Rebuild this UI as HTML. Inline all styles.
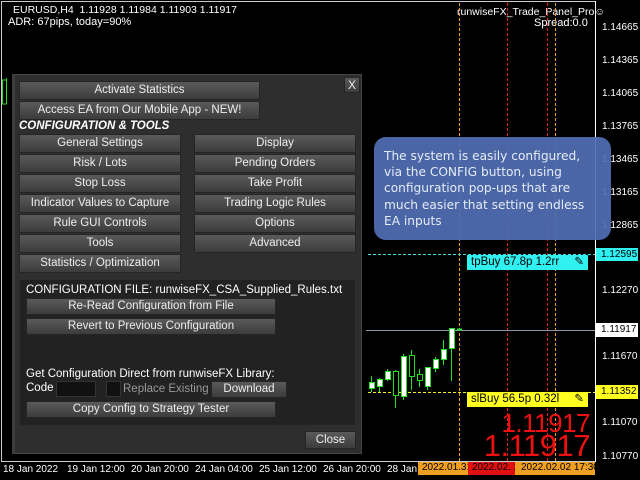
<!DOCTYPE html>
<html><head><meta charset="utf-8"><style>
*{margin:0;padding:0;box-sizing:border-box}
body{width:640px;height:480px;background:#000;position:relative;overflow:hidden;font-family:"Liberation Sans",sans-serif;font-size:11px;color:#fff}
.a{position:absolute}
.btn{position:absolute;height:19px;background:linear-gradient(#5a5a5a,#3c3c3c);border:1px solid #252525;color:#eee;text-align:center;line-height:17px;font-size:11.5px}
.sc{position:absolute;left:602px;font-size:10px;color:#fff}
.vd{position:absolute;width:0;top:3px;height:458px}
.bx{position:absolute;left:596px;width:42px;color:#000;font-size:10px;padding-left:5px}
</style></head><body>
<div class="a" style="left:1px;top:1px;width:595px;height:461px;border:1px solid #ccc;border-right:1px solid #fff"></div>
<div class="a" style="left:13px;top:4px;font-size:10.5px">EURUSD,H4&nbsp; 1.11928 1.11984 1.11903 1.11917</div>
<div class="a" style="left:8px;top:16px;font-size:11px">ADR: 67pips, today=90%</div>
<div class="a" style="left:457px;top:6px;font-size:10.5px">runwiseFX_Trade_Panel_Pro☺</div>
<div class="a" style="left:534px;top:17px;font-size:11px">Spread:0.0</div>

<div class="vd" style="left:459px;border-left:1px dashed #f0a020"></div>
<div class="vd" style="left:507px;border-left:1px dashed #e02020"></div>
<div class="vd" style="left:547px;border-left:1px dashed #e02020"></div>
<div class="vd" style="left:555px;border-left:1px dashed #f0a020"></div>
<div class="a" style="left:368px;top:254px;width:228px;border-top:1px dashed #40e0e0"></div>
<div class="a" style="left:366px;top:330px;width:230px;border-top:1px solid #8a96a8"></div>
<div class="a" style="left:368px;top:392px;width:228px;border-top:1px dashed #f0f020"></div>

<svg class="a" style="left:0;top:0" width="640" height="480">
<g stroke="#20e020" stroke-width="1">
<line x1="371.5" y1="376" x2="371.5" y2="392"/><rect x="369.5" y="382.5" width="5" height="6" fill="#fff"/>
<line x1="379.5" y1="378" x2="379.5" y2="392"/><rect x="377.5" y="379.5" width="5" height="7" fill="#fff"/>
<line x1="387.5" y1="369" x2="387.5" y2="381"/><rect x="385.5" y="371.5" width="5" height="8" fill="#fff"/>
<line x1="395.5" y1="370" x2="395.5" y2="408"/><rect x="393.5" y="371.5" width="5" height="24" fill="#000"/>
<line x1="403.5" y1="354" x2="403.5" y2="400"/><rect x="401.5" y="356.5" width="5" height="40" fill="#fff"/>
<line x1="411.5" y1="350" x2="411.5" y2="390"/><rect x="409.5" y="355.5" width="5" height="21" fill="#000"/>
<line x1="419.5" y1="369" x2="419.5" y2="387"/><rect x="417.5" y="374.5" width="5" height="6" fill="#000"/>
<line x1="427.5" y1="367" x2="427.5" y2="390"/><rect x="425.5" y="367.5" width="5" height="19" fill="#fff"/>
<line x1="435.5" y1="357" x2="435.5" y2="372"/><rect x="433.5" y="359.5" width="5" height="9" fill="#fff"/>
<line x1="443.5" y1="340" x2="443.5" y2="365"/><rect x="441.5" y="349.5" width="5" height="10" fill="#fff"/>
<line x1="451.5" y1="328" x2="451.5" y2="381"/><rect x="449.5" y="328.5" width="5" height="20" fill="#fff"/>
<line x1="457" y1="329.5" x2="462" y2="329.5" stroke-width="2"/>
<line x1="6.5" y1="78" x2="6.5" y2="104"/><rect x="2.5" y="80" width="4" height="24" fill="none"/>
</g></svg>

<div class="a" style="left:595px;top:3px;width:1px;height:459px;background:#fff"></div>
<div class="sc" style="top:22px">1.14665</div>
<div class="sc" style="top:55px">1.14365</div>
<div class="sc" style="top:88px">1.14065</div>
<div class="sc" style="top:121px">1.13765</div>
<div class="sc" style="top:154px">1.13465</div>
<div class="sc" style="top:187px">1.13165</div>
<div class="sc" style="top:220px">1.12865</div>
<div class="bx" style="top:248px;height:13px;background:#30f0f0;line-height:13px">1.12595</div>
<div class="sc" style="top:285px">1.12270</div>
<div class="bx" style="top:323px;height:14px;background:#fff;line-height:14px">1.11917</div>
<div class="sc" style="top:351px">1.11670</div>
<div class="bx" style="top:385px;height:14px;background:#ffff20;line-height:14px">1.11352</div>
<div class="sc" style="top:417px">1.11070</div>
<div class="sc" style="top:451px">1.10770</div>

<div class="a" style="left:467px;top:255px;width:121px;height:15px;background:#30f0f0;color:#000;font-size:11.5px;padding-left:4px;line-height:15px">tpBuy 67.8p 1.2rr<span style="position:absolute;right:4px">✎</span></div>
<div class="a" style="left:467px;top:392px;width:121px;height:15px;background:#ffff20;color:#000;font-size:11.5px;padding-left:4px;line-height:15px">slBuy 56.5p 0.32l<span style="position:absolute;right:4px">✎</span></div>
<div class="a" style="right:50px;top:408px;color:#f01010;font-size:26px;line-height:30px;letter-spacing:-0.5px">1.11917</div>
<div class="a" style="right:50px;top:428px;color:#f01010;font-size:31px;line-height:36px;letter-spacing:-0.5px">1.11917</div>

<div class="a" style="left:0;top:462px;width:596px;font-size:10px;white-space:nowrap">
<span class="a" style="left:3px;top:2px">18 Jan 2022</span>
<span class="a" style="left:67px;top:2px">19 Jan 12:00</span>
<span class="a" style="left:131px;top:2px">20 Jan 20:00</span>
<span class="a" style="left:195px;top:2px">24 Jan 04:00</span>
<span class="a" style="left:259px;top:2px">25 Jan 12:00</span>
<span class="a" style="left:323px;top:2px">26 Jan 20:00</span>
<span class="a" style="left:387px;top:2px">28 Jan 0</span>
</div>
<div class="a" style="left:418px;top:462px;width:50px;height:13px;background:#f0a020;color:#000;font-size:10px;padding-left:4px;overflow:hidden;white-space:nowrap">2022.01.31</div>
<div class="a" style="left:468px;top:462px;width:48px;height:13px;background:#e01010;color:#000;font-size:10px;padding-left:4px;overflow:hidden;white-space:nowrap">2022.02. 2</div>
<div class="a" style="left:515px;top:462px;width:80px;height:13px;background:#f0a020;color:#000;font-size:10px;padding-left:6px;white-space:nowrap;overflow:hidden">2022.02.02 17:30</div>

<div class="a" style="left:374px;top:137px;width:237px;height:103px;border-radius:12px;background:rgba(80,110,180,0.93);color:#e6ecf6;font-family:'DejaVu Sans',sans-serif;font-size:12.2px;line-height:16.2px;padding:11px 0 0 10px;white-space:nowrap">The system is easily configured,<br>via the CONFIG button, using<br>configuration pop-ups that are<br>much easier that setting endless<br>EA inputs</div>

<div class="a" style="left:12px;top:74px;width:350px;height:380px;background:#2e2e2e;border:1px solid #444;border-left:3px solid #3c3c3c"></div>
<div class="btn" style="left:344px;top:77px;width:16px;height:16px;line-height:14px;font-size:12px">X</div>
<div class="btn" style="left:19px;top:81px;width:241px">Activate Statistics</div>
<div class="btn" style="left:19px;top:101px;width:241px">Access EA from Our Mobile App - NEW!</div>
<div class="a" style="left:19px;top:120px;font-weight:bold;font-style:italic;font-size:11.5px">CONFIGURATION &amp; TOOLS</div>
<div class="btn" style="left:19px;top:134px;width:162px">General Settings</div>
<div class="btn" style="left:19px;top:154px;width:162px">Risk / Lots</div>
<div class="btn" style="left:19px;top:174px;width:162px">Stop Loss</div>
<div class="btn" style="left:19px;top:194px;width:162px">Indicator Values to Capture</div>
<div class="btn" style="left:19px;top:214px;width:162px">Rule GUI Controls</div>
<div class="btn" style="left:19px;top:234px;width:162px">Tools</div>
<div class="btn" style="left:19px;top:254px;width:162px">Statistics / Optimization</div>
<div class="btn" style="left:194px;top:134px;width:162px">Display</div>
<div class="btn" style="left:194px;top:154px;width:162px">Pending Orders</div>
<div class="btn" style="left:194px;top:174px;width:162px">Take Profit</div>
<div class="btn" style="left:194px;top:194px;width:162px">Trading Logic Rules</div>
<div class="btn" style="left:194px;top:214px;width:162px">Options</div>
<div class="btn" style="left:194px;top:234px;width:162px">Advanced</div>

<div class="a" style="left:20px;top:280px;width:335px;height:145px;background:#222"></div>
<div class="a" style="left:26px;top:284px;font-size:11.5px">CONFIGURATION FILE: runwiseFX_CSA_Supplied_Rules.txt</div>
<div class="btn" style="left:26px;top:298px;width:250px;height:17px;line-height:15px">Re-Read Configuration from File</div>
<div class="btn" style="left:26px;top:318px;width:250px;height:17px;line-height:15px">Revert to Previous Configuration</div>
<div class="a" style="left:26px;top:368px;font-size:11.5px">Get Configuration Direct from runwiseFX Library:</div>
<div class="a" style="left:26px;top:382px;font-size:11.5px">Code</div>
<div class="a" style="left:56px;top:381px;width:40px;height:16px;background:#111;border:1px solid #333"></div>
<div class="a" style="left:106px;top:381px;width:15px;height:16px;background:#111;border:1px solid #333"></div>
<div class="a" style="left:123px;top:383px;font-size:11.5px;color:#999">Replace Existing</div>
<div class="btn" style="left:211px;top:381px;width:76px;height:17px;line-height:15px">Download</div>
<div class="btn" style="left:26px;top:401px;width:250px;height:17px;line-height:15px">Copy Config to Strategy Tester</div>
<div class="btn" style="left:305px;top:431px;width:51px;height:18px;line-height:16px">Close</div>
</body></html>
